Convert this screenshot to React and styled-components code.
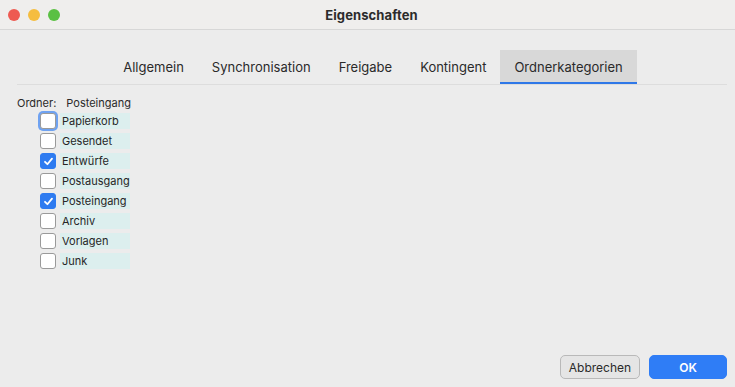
import React from "react";
import styled, { createGlobalStyle } from "styled-components";

const Global = createGlobalStyle`
  html, body { margin: 0; padding: 0; }
  body { background: #ececec; font-family: Inter, "Liberation Sans", sans-serif; color: #262626; }
  * { box-sizing: border-box; }
`;

const Window = styled.div`
  width: 735px;
  height: 387px;
  display: flex;
  flex-direction: column;
  background: #ececec;
`;

const TitleBar = styled.div`
  height: 30px;
  flex: none;
  display: grid;
  grid-template-columns: 1fr auto 1fr;
  align-items: center;
  background: #efeeed;
  border-bottom: 1px solid #d7d7d7;
  padding: 0 0 0 8px;
`;

const Lights = styled.div`
  display: flex;
  gap: 8px;
  align-items: center;
`;

const Light = styled.span`
  width: 12px;
  height: 12px;
  border-radius: 50%;
  background: ${(p) => p.$c};
`;

const Title = styled.div`
  font-size: 13px;
  font-weight: 700;
  color: #2b2b2b;
  letter-spacing: 0.1px;
`;

const Body = styled.div`
  flex: 1;
  display: flex;
  flex-direction: column;
  padding: 20px 8px 8px 17px;
`;

const Tabs = styled.div`
  display: flex;
  justify-content: center;
  padding-left: 2px;
  border-bottom: 1px solid #dddddd;
`;

const Tab = styled.div`
  font-size: 13px;
  height: 34px;
  display: flex;
  align-items: center;
  padding: 2px 14px 0;
  color: #2a2a2a;
  background: ${(p) => (p.$active ? "#d8d8d8" : "transparent")};
  border-bottom: 2px solid ${(p) => (p.$active ? "#2f78e8" : "transparent")};
`;

const Content = styled.div`
  flex: 1;
  padding-top: 10px;
  display: flex;
  flex-direction: column;
`;

const FolderRow = styled.div`
  display: flex;
  font-size: 11px;
  color: #2a2a2a;
  gap: 10px;
  height: 15px;
  align-items: center;
  margin-bottom: 1px;
`;

const List = styled.div`
  display: flex;
  flex-direction: column;
  padding-left: 23px;
`;

const Item = styled.label`
  display: flex;
  align-items: center;
  height: 20px;
  gap: 4px;
`;

const Box = styled.span`
  width: 16px;
  height: 16px;
  border-radius: 3px;
  flex: none;
  display: flex;
  align-items: center;
  justify-content: center;
  background: ${(p) => (p.$checked ? "#2f7bf0" : "#ffffff")};
  border: 1px solid ${(p) => (p.$checked ? "#2f7bf0" : "#9a9a9a")};
  box-shadow: ${(p) => (p.$focus ? "0 0 0 2px #6fa2f1" : "none")};
`;

const Label = styled.span`
  width: 70px;
  height: 16px;
  display: flex;
  align-items: center;
  padding-left: 2px;
  font-size: 11px;
  color: #262626;
  background: #dcefee;
`;

const Footer = styled.div`
  display: flex;
  justify-content: flex-end;
  gap: 9px;
`;

const Button = styled.button`
  width: ${(p) => p.$w}px;
  height: 24px;
  border-radius: 5px;
  font-family: inherit;
  font-size: 12px;
  font-weight: ${(p) => (p.$primary ? 600 : 400)};
  color: ${(p) => (p.$primary ? "#ffffff" : "#2a2a2a")};
  background: ${(p) => (p.$primary ? "#2f7df6" : "#e5e5e5")};
  border: 1px solid ${(p) => (p.$primary ? "#2f7df6" : "#b9b9b9")};
  padding: 0;
`;

const Check = () => (
  <svg width="11" height="11" viewBox="0 0 11 11">
    <path d="M2 5.8 L4.4 8.2 L9 2.6" fill="none" stroke="#fff" strokeWidth="1.8" strokeLinecap="round" strokeLinejoin="round" />
  </svg>
);

const tabs = [
  ["Allgemein"],
  ["Synchronisation"],
  ["Freigabe"],
  ["Kontingent"],
  ["Ordnerkategorien", true],
];

const items = [
  ["Papierkorb", false, true],
  ["Gesendet", false],
  ["Entwürfe", true],
  ["Postausgang", false],
  ["Posteingang", true],
  ["Archiv", false],
  ["Vorlagen", false],
  ["Junk", false],
];

export default function App() {
  return (
    <>
      <Global />
      <Window>
        <TitleBar>
          <Lights>
            <Light $c="#ee5a52" />
            <Light $c="#f5bd3f" />
            <Light $c="#5ac043" />
          </Lights>
          <Title>Eigenschaften</Title>
          <div />
        </TitleBar>
        <Body>
          <Tabs>
            {tabs.map(([t, a]) => (
              <Tab key={t} $active={a}>
                {t}
              </Tab>
            ))}
          </Tabs>
          <Content>
            <FolderRow>
              <span>Ordner:</span>
              <span>Posteingang</span>
            </FolderRow>
            <List>
              {items.map(([name, checked, focus]) => (
                <Item key={name}>
                  <Box $checked={checked} $focus={focus}>
                    {checked && <Check />}
                  </Box>
                  <Label>{name}</Label>
                </Item>
              ))}
            </List>
          </Content>
          <Footer>
            <Button $w={80}>Abbrechen</Button>
            <Button $w={78} $primary>
              OK
            </Button>
          </Footer>
        </Body>
      </Window>
    </>
  );
}
